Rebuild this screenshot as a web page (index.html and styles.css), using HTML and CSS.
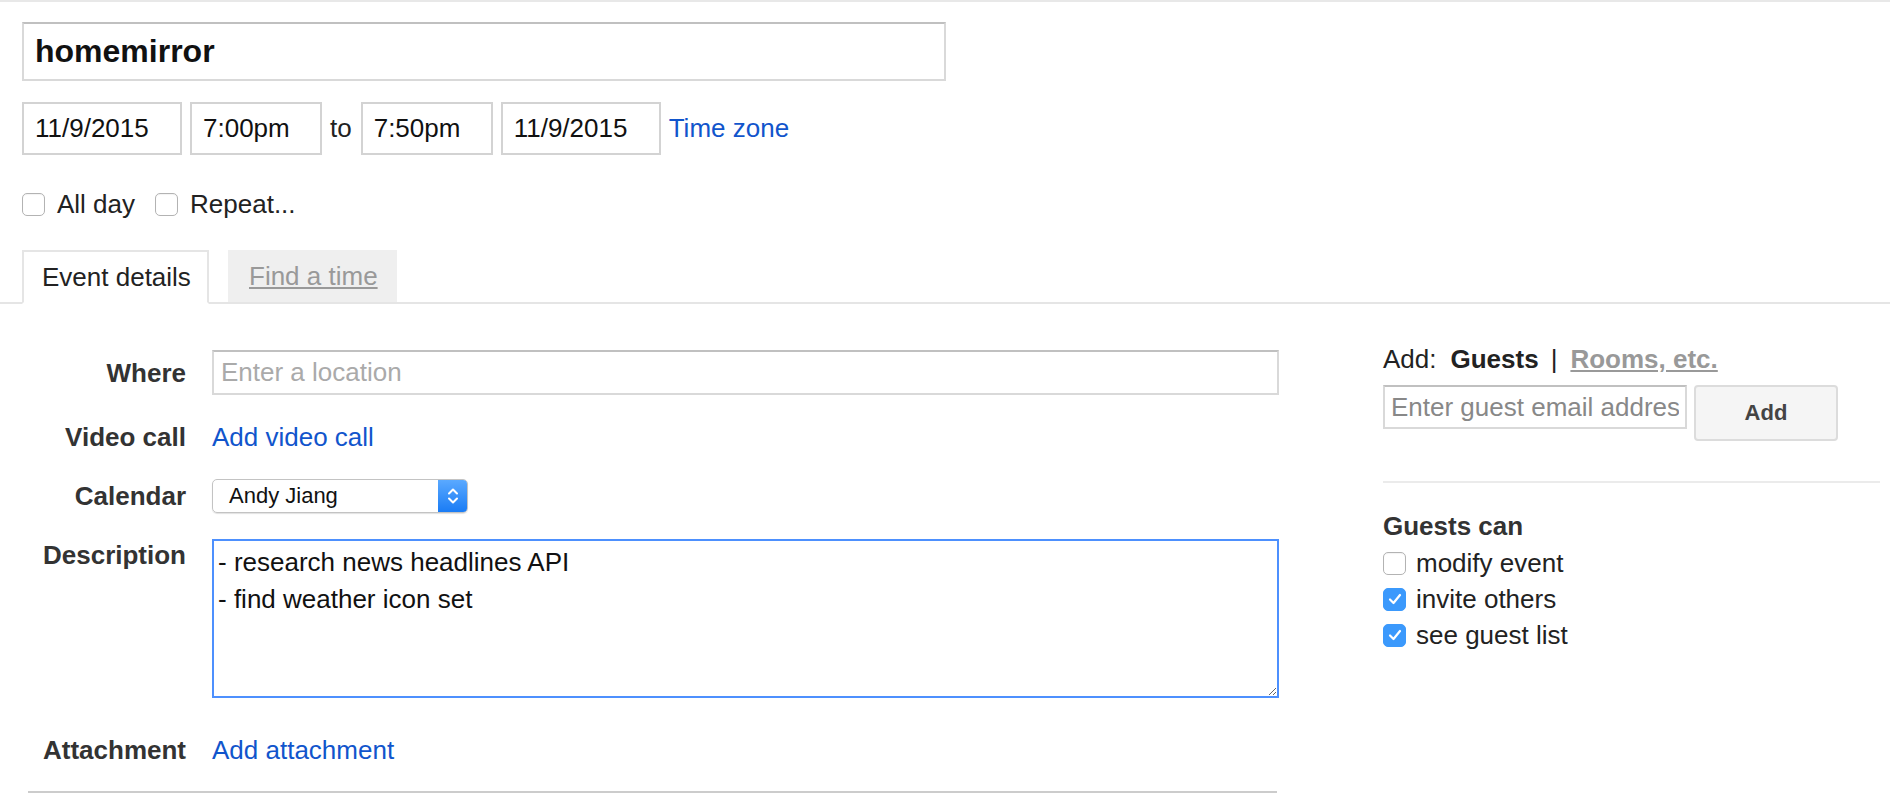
FILE: index.html
```html
<!doctype html>
<html lang="en">

<head>
    <meta charset="utf-8">
    <title>homemirror - Edit event</title>
    <link rel="stylesheet" href="styles.css">
</head>

<body>
<div class="head">
    <input class="title" type="text" value="homemirror">

    <div class="when">
        <input class="field date" type="text" value="11/9/2015">
        <input class="field time" type="text" value="7:00pm">
        <span class="to">to</span>
        <input class="field time" type="text" value="7:50pm">
        <input class="field date" type="text" value="11/9/2015">
        <a href="#" class="link zone">Time zone</a>
    </div>

    <div class="options">
        <label class="check"><span class="box"></span>All day</label>
        <label class="check"><span class="box"></span>Repeat...</label>
    </div>
</div>

<div class="tabs">
    <div class="tab active">Event details</div>
    <div class="tab"><a href="#">Find a time</a></div>
</div>

<div class="main">
    <div class="details">
        <div class="form">
            <div class="label">Where</div>
            <input class="where" type="text" placeholder="Enter a location">

            <div class="label">Video call</div>
            <div><a href="#" class="link">Add video call</a></div>

            <div class="label">Calendar</div>
            <div class="select">
                <span class="select-value">Andy Jiang</span>
                <span class="stepper">
                    <svg width="14" height="22" viewBox="0 0 14 22" fill="none" stroke="#fff" stroke-width="2" stroke-linecap="round" stroke-linejoin="round">
                        <path d="M3 8.5 7 4.5l4 4"/>
                        <path d="M3 13.5 7 17.5l4-4"/>
                    </svg>
                </span>
            </div>

            <div class="label top">Description</div>
            <textarea class="description">- research news headlines API
- find weather icon set</textarea>

            <div class="label attach">Attachment</div>
            <div class="attach"><a href="#" class="link">Add attachment</a></div>
        </div>
        <div class="rule"></div>
    </div>

    <aside class="guests">
        <div class="add-line">
            Add:<b class="current">Guests</b><span class="pipe">|</span><a href="#" class="rooms">Rooms, etc.</a>
        </div>
        <div class="guest-add">
            <input class="guest-input" type="text" placeholder="Enter guest email address">
            <button type="button" class="add-button">Add</button>
        </div>
        <div class="separator"></div>
        <div class="can-title">Guests can</div>
        <ul class="perms">
            <li><label class="check"><span class="box"></span>modify event</label></li>
            <li><label class="check"><span class="box on"><svg width="14" height="12" viewBox="0 0 14 12" fill="none" stroke="#fff" stroke-width="2.2" stroke-linecap="round" stroke-linejoin="round"><path d="M2 6.5 5.5 10 12 2"/></svg></span>invite others</label></li>
            <li><label class="check"><span class="box on"><svg width="14" height="12" viewBox="0 0 14 12" fill="none" stroke="#fff" stroke-width="2.2" stroke-linecap="round" stroke-linejoin="round"><path d="M2 6.5 5.5 10 12 2"/></svg></span>see guest list</label></li>
        </ul>
    </aside>
</div>
</body>
</html>
```

FILE: styles.css
```css
:root {
    --color-text: #222;
    --color-label: #333;
    --color-link: #15c;
    --color-muted: #999;
    --color-line: #e5e5e5;
    --color-border: #d9d9d9;
    --color-border-top: #c0c0c0;
    --color-focus: #4d90fe;
    --color-check: #3b99fc;

    --font-stack: 'Liberation Sans', Arial, Helvetica, sans-serif;
}

*, *::before, *::after {
    box-sizing: border-box;
}

body {
    margin: 0;
    border-top: 2px solid #e8e8e8;
    font-family: var(--font-stack);
    font-size: 26px;
    color: var(--color-text);
    background: #fff;
}

input, textarea, button {
    font-family: var(--font-stack);
    font-size: 26px;
    color: #111;
    margin: 0;
}

input, textarea {
    outline: none;
    background: #fff;
    border: 2px solid var(--color-border);
    border-top-color: var(--color-border-top);
}

::placeholder {
    color: #aaa;
    opacity: 1;
}

.link {
    color: var(--color-link);
    text-decoration: none;
}

/* Header: title, dates, options */

.head {
    padding: 20px 22px 0;
}

.title {
    display: block;
    width: 924px;
    height: 59px;
    padding: 0 11px;
    font-size: 32px;
    font-weight: bold;
}

.when {
    display: flex;
    align-items: center;
    margin-top: 21px;
    height: 53px;
}

.field {
    height: 53px;
    padding: 0 11px;
    border-color: #d3d3d3;
    margin-right: 8px;
}

.date {
    width: 160px;
}

.time {
    width: 132px;
}

.to {
    margin: 0 9px 0 0;
}

.zone {
    margin-left: 0;
}

.options {
    display: flex;
    align-items: center;
    gap: 20px;
    margin-top: 34px;
    line-height: 30px;
}

.check {
    display: flex;
    align-items: center;
    gap: 12px;
    cursor: pointer;
}

.box {
    display: flex;
    align-items: center;
    justify-content: center;
    width: 23px;
    height: 23px;
    border: 1.5px solid #b3b3b3;
    border-radius: 5px;
    background: #fff;
    box-shadow: inset 0 1px 1px rgb(0 0 0 / 0.05);
}

.box.on {
    border-color: var(--color-check);
    background: var(--color-check);
    box-shadow: none;
}

/* Tabs */

.tabs {
    display: flex;
    align-items: flex-end;
    gap: 19px;
    margin-top: 31px;
    padding-left: 22px;
    border-bottom: 2px solid var(--color-line);
}

.tab {
    display: flex;
    align-items: center;
    height: 52px;
    padding: 0 19px 0 21px;
    background: #efefef;
}

.tab a {
    color: var(--color-muted);
}

.tab.active {
    height: 54px;
    margin-bottom: -2px;
    padding: 0 16px 0 18px;
    width: 187px;
    background: #fff;
    border: 2px solid var(--color-line);
    border-bottom-color: #fff;
    color: var(--color-text);
}

/* Event details */

.main {
    display: flex;
    padding: 0 10px 0 22px;
}

.details {
    width: 1257px;
    padding-top: 46px;
}

.form {
    display: grid;
    grid-template-columns: 164px 1067px;
    column-gap: 26px;
    row-gap: 26px;
    align-items: center;
    line-height: 32px;
}

.label {
    text-align: right;
    font-weight: bold;
    color: var(--color-label);
}

.label.top {
    align-self: start;
}

.attach {
    margin-top: 10px;
}

.where {
    width: 100%;
    height: 45px;
    padding: 0 7px;
}

.select {
    display: flex;
    width: 256px;
    height: 34px;
    border: 1px solid #c3c3c3;
    border-radius: 5px;
    box-shadow: 0 1px 1px rgb(0 0 0 / 0.12);
    font-size: 22px;
    color: #111;
    overflow: hidden;
}

.select-value {
    flex: 1;
    padding-left: 16px;
    line-height: 32px;
}

.stepper {
    display: flex;
    align-items: center;
    justify-content: center;
    width: 29px;
    background: linear-gradient(#5aa9ff, #1a7cf5);
}

.description {
    width: 100%;
    height: 159px;
    padding: 3px 4px;
    line-height: 37px;
    border: 2px solid var(--color-focus);
    resize: both;
}

.rule {
    height: 2px;
    margin: 25px 2px 0 6px;
    background: #ccc;
}

/* Guests */

.guests {
    width: 497px;
    margin-left: 104px;
    padding-top: 40px;
}

.add-line {
    display: flex;
    align-items: center;
    line-height: 30px;
}

.current {
    margin-left: 14px;
}

.pipe {
    margin: 0 13px 0 12px;
}

.rooms {
    color: var(--color-muted);
    font-weight: bold;
}

.guest-add {
    display: flex;
    align-items: flex-start;
    gap: 7px;
    margin-top: 11px;
}

.guest-input {
    width: 304px;
    height: 44px;
    padding: 0 6px;
}

.guest-input::placeholder {
    color: #888;
}

.add-button {
    width: 144px;
    height: 56px;
    background: #f5f5f5;
    border: 2px solid #dcdcdc;
    border-radius: 4px;
    font-size: 22px;
    font-weight: bold;
    color: #444;
    cursor: pointer;
}

.separator {
    height: 2px;
    margin-top: 40px;
    background: #ebebeb;
}

.can-title {
    margin-top: 28px;
    line-height: 30px;
    font-weight: bold;
    color: var(--color-label);
}

.perms {
    list-style: none;
    margin: 4px 0 0;
    padding: 0;
}

.perms li {
    height: 36px;
    display: flex;
    align-items: center;
}

.perms .check {
    gap: 10px;
}
```
